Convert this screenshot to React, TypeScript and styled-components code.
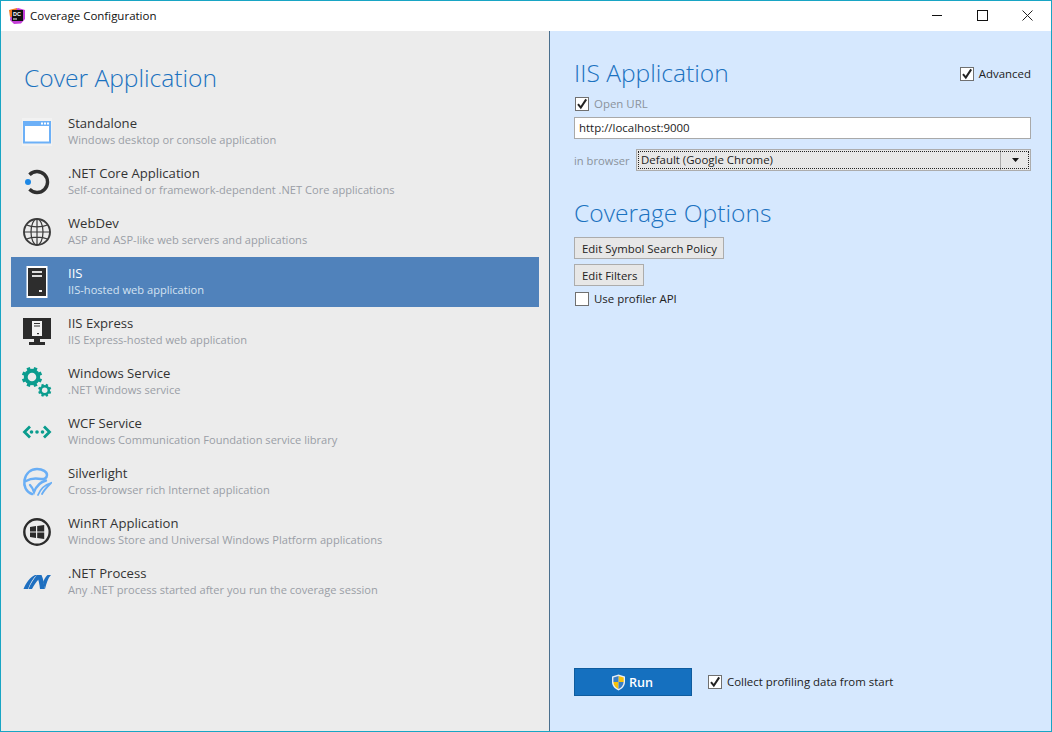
import React from "react";
import styled, { createGlobalStyle } from "styled-components";

const Global = createGlobalStyle`
  html, body { margin: 0; padding: 0; background: #fff; }
  body { font-family: "Open Sans", "Noto Sans", sans-serif; }
  * { box-sizing: border-box; }
`;

const Win = styled.div`
  width: 1052px; height: 732px; border: 1px solid #18a5c4;
  display: flex; flex-direction: column; background: #fff; overflow: hidden;
`;
const TitleBar = styled.div`
  height: 30px; flex: none; display: flex; align-items: center; background: #fff; padding-left: 8px;
`;
const TitleText = styled.span`
  margin-left: 5px; padding-bottom: 2px; font-size: 11.5px; color: #111; flex: 1; white-space: nowrap;
`;
const WinButtons = styled.div`
  display: flex; align-items: center; width: 136px; height: 30px; padding-right: 1px;
`;
const WinBtn = styled.div`
  width: 45px; height: 30px; padding-bottom: 1px; display: flex; align-items: center; justify-content: center;
`;
const Body = styled.div`flex: 1; display: flex; min-height: 0;`;
const Left = styled.div`
  width: 549px; flex: none; background: #ececec; border-right: 1px solid #4a6f8e;
  padding: 30px 10px 0 10px; display: flex; flex-direction: column;
`;
const Heading = styled.h1`
  margin: 0; font-weight: 300; font-size: 24.6px; line-height: 34px; color: #1b72c0; white-space: nowrap;
`;
const LeftHeading = styled(Heading)`padding-left: 13px; margin-bottom: 12px;`;
const List = styled.div`display: flex; flex-direction: column;`;
const Row = styled.div<{ $on?: boolean }>`
  height: 50px; display: flex; align-items: center; background: ${p => (p.$on ? "#5082bb" : "transparent")};
`;
const IconBox = styled.div`width: 52px; flex: none; display: flex; justify-content: center;`;
const RowText = styled.div`margin-left: 5px; margin-bottom: 2px; display: flex; flex-direction: column;`;
const RowTitle = styled.div<{ $on?: boolean }>`
  font-size: 13.1px; line-height: 17px; white-space: nowrap; color: ${p => (p.$on ? "#fff" : "#333")};
`;
const RowSub = styled.div<{ $on?: boolean }>`
  font-size: 11.1px; line-height: 16px; white-space: nowrap; color: ${p => (p.$on ? "#d4e2f2" : "#9a9ea6")};
`;
const Right = styled.div`
  flex: 1; background: #d6e8fe; padding: 25px 20px 0 24px; display: flex; flex-direction: column;
`;
const HeadRow = styled.div`display: flex; justify-content: space-between; align-items: center; height: 34px;`;
const Check = styled.label`display: inline-flex; align-items: center; gap: 5px; white-space: nowrap;`;
const HeadCheck = styled(Check)`margin-top: 2px;`;
const Box = styled.span`
  width: 14px; height: 14px; background: #fff; border: 1px solid #707070; display: inline-flex;
  align-items: center; justify-content: center; flex: none;
`;
const CheckLabel = styled.span<{ $dim?: boolean }>`
  font-size: 11.45px; line-height: 16px; color: ${p => (p.$dim ? "#8b939c" : "#222")};
`;
const CheckRow = styled.div<{ $top?: number }>`
  height: 16px; margin-top: ${p => p.$top ?? 6}px; display: flex; align-items: center; padding-left: 1px;
`;
const Input = styled.div`
  margin-top: 5px; height: 22px; background: #fff; border: 1px solid #a9a9a9; padding-left: 4px;
  font-size: 11.45px; line-height: 20px; color: #222;
`;
const BrowserRow = styled.div`margin-top: 10px; height: 22px; display: flex; align-items: center;`;
const BrowserLabel = styled.span`font-size: 11.2px; color: #8b939c; width: 62px; flex: none; white-space: nowrap;`;
const Select = styled.div`
  flex: 1; height: 22px; background: #e7e7e7; border: 1px solid #acacac; display: flex; position: relative;
  font-size: 11.45px; color: #222; line-height: 20px;
`;
const SelectValue = styled.div`flex: 1; padding-left: 4px;`;
const SelectArrow = styled.div`
  width: 30px; border-left: 1px solid #acacac; display: flex; align-items: center; justify-content: center;
`;
const Focus = styled.div`
  position: absolute; inset: 1px; border: 1px dotted #222; pointer-events: none;
`;
const OptionsHeading = styled(Heading)`margin-top: 25px; margin-bottom: 7px;`;
const Button = styled.div`
  display: inline-flex; align-self: flex-start; height: 22px; align-items: center; padding: 0 6px 0 7px;
  background: #e7e7e7; border: 1px solid #acacac; font-size: 11.4px; color: #222; white-space: nowrap;
  margin-bottom: 5px;
`;
const Spacer = styled.div`flex: 1;`;
const Footer = styled.div`display: flex; align-items: center; height: 28px; margin-bottom: 35px;`;
const RunButton = styled.div`
  width: 118px; height: 28px; background: #1570bf; border: 1px solid #0f5c9e; color: #fff;
  display: flex; align-items: center; justify-content: center; gap: 3px; padding-right: 2px;
  font-size: 12.6px; font-weight: 600;
`;
const FooterCheck = styled(Check)`margin-left: 16px; margin-top: -1px;`;

const Tick = () => (
  <svg width="12" height="12" viewBox="0 0 12 12"><path d="M2 6.2 L4.8 9.6 L10.2 1.4" fill="none" stroke="#222" strokeWidth="2" /></svg>
);

const Gear = ({ cx, cy, r, t }: { cx: number; cy: number; r: number; t: number }) => (
  <g fill="#0a9c8e">
    {[0, 45, 90, 135].map(a => (
      <rect key={a} x={cx - t / 2} y={cy - r} width={t} height={r * 2} transform={`rotate(${a + 22.5} ${cx} ${cy})`} />
    ))}
    <circle cx={cx} cy={cy} r={r * 0.8} />
    <circle cx={cx} cy={cy} r={r * 0.42} fill="#ececec" />
  </g>
);

const icons: Record<string, React.ReactNode> = {
  standalone: (
    <svg width="30" height="28" viewBox="0 0 30 28">
      <rect x="0" y="0" width="30" height="28" fill="#f7f7f7" opacity=".6" />
      <rect x="1" y="3" width="28" height="22.5" fill="#6cb0f7" />
      <rect x="3" y="8" width="24" height="15.5" fill="#fff" />
      <rect x="19" y="4.5" width="2" height="2" fill="#fff" /><rect x="22" y="4.5" width="2" height="2" fill="#fff" /><rect x="25" y="4.5" width="2" height="2" fill="#fff" />
    </svg>
  ),
  core: (
    <svg width="30" height="30" viewBox="0 0 30 30">
      <path d="M7.5 7.7 A10.5 10.5 0 1 1 7.5 22.3" fill="none" stroke="#2f2f2f" strokeWidth="3.4" />
      <circle cx="6" cy="15" r="3" fill="#1e88e5" />
    </svg>
  ),
  web: (
    <svg width="30" height="30" viewBox="0 0 30 30" fill="none" stroke="#3a3a3a">
      <circle cx="15" cy="15" r="13" strokeWidth="1.9" />
      <ellipse cx="15" cy="15" rx="6" ry="13" strokeWidth="1.2" />
      <path d="M15 2v26M2 15h26M4.5 8 C10 10.5 20 10.5 25.5 8M4.5 22 C10 19.5 20 19.5 25.5 22" strokeWidth="1.2" />
    </svg>
  ),
  iis: (
    <svg width="22" height="32" viewBox="0 0 22 32">
      <rect x="0.5" y="0" width="21" height="32" fill="#fff" />
      <rect x="2" y="2" width="18" height="28" fill="#2d2d2d" />
      <rect x="6" y="5" width="10" height="2" fill="#ddd" /><rect x="6" y="9" width="10" height="2" fill="#ddd" />
      <rect x="13" y="24" width="3" height="2" fill="#eee" />
    </svg>
  ),
  express: (
    <svg width="30" height="28" viewBox="0 0 30 28">
      <rect x="1" y="0" width="28" height="21" fill="#2b2b2b" />
      <rect x="12" y="21" width="6" height="3" fill="#2b2b2b" /><rect x="7" y="24" width="16" height="3" fill="#2b2b2b" />
      <rect x="10" y="3" width="10" height="15" fill="#f3f3f3" />
      <rect x="12" y="5" width="6" height="1" fill="#333" /><rect x="12" y="7.5" width="6" height="1" fill="#333" /><rect x="15" y="15" width="2" height="1.2" fill="#333" />
    </svg>
  ),
  service: (
    <svg width="32" height="32" viewBox="0 0 32 32">
      <Gear cx={11} cy={11} r={10.2} t={3.6} />
      <Gear cx={23.7} cy={24.3} r={6.6} t={2.4} />
    </svg>
  ),
  wcf: (
    <svg width="30" height="14" viewBox="0 0 30 14">
      <g fill="none" stroke="#0a9c8e" strokeWidth="2.8">
        <path d="M8 1.5 L2.5 7 L8 12.5" /><path d="M22 1.5 L27.5 7 L22 12.5" />
      </g>
      <g fill="#0a9c8e"><circle cx="9.5" cy="7" r="1.8" /><circle cx="15" cy="7" r="1.8" /><circle cx="20.5" cy="7" r="1.8" /></g>
    </svg>
  ),
  silver: (
    <svg width="30" height="30" viewBox="0 0 30 30" fill="none" stroke="#69aef5" strokeLinecap="round">
      <path d="M10 27 C4 25 1.5 19 2.5 13 C4 6 9 2 15 2 C21 2 25 5 25 8 C25 11 22 12.5 19 12 C14 11 9 11 4 14" strokeWidth="2.5" />
      <path d="M8 18 C10 20 11 22 12 25 C14 20 18 15 24 13.5" strokeWidth="2.4" />
      <path d="M16 28 C18 23 22 18 29 16 C25 20 22 23 20 27" strokeWidth="1.8" />
    </svg>
  ),
  winrt: (
    <svg width="30" height="30" viewBox="0 0 30 30">
      <circle cx="15" cy="15" r="12.7" fill="none" stroke="#2b2b2b" strokeWidth="2.4" />
      <path d="M8 10l6-.9v5.4H8zM15.2 8.9l7-1v6.6h-7zM8 15.6h6v5.3l-6-.9zM15.2 15.6h7v6.5l-7-1z" fill="#2b2b2b" />
    </svg>
  ),
  net: (
    <svg width="28" height="16" viewBox="0 0 28 16" fill="#1e6fc0">
      <path d="M0.5 15 C3 9 7 3 12 1 L14 1 C10 4 7 9 5 15z" />
      <path d="M5.5 15 C7.5 10 10.5 5 14 1 L16 5 C13 8 11 11 9 15z" />
      <path d="M13.5 1 L18.5 1 C20.5 5 21 10 21.5 15 L17 15 C16.5 10 15.5 5 13.5 1z" />
      <path d="M20 8 C21 5.5 22.5 3 24.5 1 L28 1 C25 4 23.5 9 22 15 L21.5 15 C21.3 12 20.8 10 20 8z" />
    </svg>
  ),
};

const rows = [
  ["standalone", "Standalone", "Windows desktop or console application"],
  ["core", ".NET Core Application", "Self-contained or framework-dependent .NET Core applications"],
  ["web", "WebDev", "ASP and ASP-like web servers and applications"],
  ["iis", "IIS", "IIS-hosted web application"],
  ["express", "IIS Express", "IIS Express-hosted web application"],
  ["service", "Windows Service", ".NET Windows service"],
  ["wcf", "WCF Service", "Windows Communication Foundation service library"],
  ["silver", "Silverlight", "Cross-browser rich Internet application"],
  ["winrt", "WinRT Application", "Windows Store and Universal Windows Platform applications"],
  ["net", ".NET Process", "Any .NET process started after you run the coverage session"],
];

export default function App() {
  return (
    <Win>
      <Global />
      <TitleBar>
        <svg width="16" height="16" viewBox="0 0 16 16">
          <path d="M2 3 L9 0 L16 2 L16 11 L12 15.5 L5 16 L1 12z" fill="#c43fd8" />
          <path d="M0 2 L8 0 L7 8 L1 9z" fill="#f47a20" />
          <rect x="3" y="2" width="11" height="11" fill="#111" />
          <text x="4" y="7.5" fontSize="5.4" fontWeight="700" fill="#fff" fontFamily="Liberation Sans, sans-serif">DC</text>
          <rect x="4" y="10.5" width="4" height="1" fill="#fff" />
        </svg>
        <TitleText>Coverage Configuration</TitleText>
        <WinButtons>
          <WinBtn><svg width="11" height="11" viewBox="0 0 11 11"><path d="M0 5.5h10" stroke="#111" strokeWidth="1" /></svg></WinBtn>
          <WinBtn><svg width="11" height="11" viewBox="0 0 11 11"><rect x=".5" y=".5" width="10" height="10" fill="none" stroke="#111" /></svg></WinBtn>
          <WinBtn><svg width="11" height="11" viewBox="0 0 11 11"><path d="M.5.5l10 10M10.5.5l-10 10" stroke="#222" strokeWidth="1" /></svg></WinBtn>
        </WinButtons>
      </TitleBar>
      <Body>
        <Left>
          <LeftHeading>Cover Application</LeftHeading>
          <List>
            {rows.map(([k, t, s]) => {
              const on = k === "iis";
              return (
                <Row key={k} $on={on}>
                  <IconBox>{icons[k]}</IconBox>
                  <RowText>
                    <RowTitle $on={on}>{t}</RowTitle>
                    <RowSub $on={on}>{s}</RowSub>
                  </RowText>
                </Row>
              );
            })}
          </List>
        </Left>
        <Right>
          <HeadRow>
            <Heading>IIS Application</Heading>
            <HeadCheck><Box><Tick /></Box><CheckLabel>Advanced</CheckLabel></HeadCheck>
          </HeadRow>
          <CheckRow><Check><Box><Tick /></Box><CheckLabel $dim>Open URL</CheckLabel></Check></CheckRow>
          <Input>http://localhost:9000</Input>
          <BrowserRow>
            <BrowserLabel>in browser</BrowserLabel>
            <Select>
              <SelectValue>Default (Google Chrome)</SelectValue>
              <SelectArrow><svg width="7" height="4" viewBox="0 0 7 4"><path d="M0 0h7L3.5 4z" fill="#111" /></svg></SelectArrow>
              <Focus />
            </Select>
          </BrowserRow>
          <OptionsHeading>Coverage Options</OptionsHeading>
          <Button>Edit Symbol Search Policy</Button>
          <Button>Edit Filters</Button>
          <CheckRow $top={0}><Check><Box /><CheckLabel>Use profiler API</CheckLabel></Check></CheckRow>
          <Spacer />
          <Footer>
            <RunButton>
              <svg width="15" height="17" viewBox="0 0 15 17">
                <path d="M7.5 0.5 L14 2.5 V8 C14 12 11 15 7.5 16.5 C4 15 1 12 1 8 V2.5z" fill="#e9eef5" />
                <path d="M7.5 2 L12.7 3.5 V8 H7.5z" fill="#f7c20a" /><path d="M7.5 8 V15 C5 14 2.6 11.5 2.4 8z" fill="#f7c20a" />
                <path d="M7.5 2 L2.4 3.5 V8 H7.5z" fill="#3b7fc4" /><path d="M7.5 8 V15 C10 14 12.4 11.5 12.6 8z" fill="#3b7fc4" />
              </svg>
              Run
            </RunButton>
            <FooterCheck><Box><Tick /></Box><CheckLabel>Collect profiling data from start</CheckLabel></FooterCheck>
          </Footer>
        </Right>
      </Body>
    </Win>
  );
}
